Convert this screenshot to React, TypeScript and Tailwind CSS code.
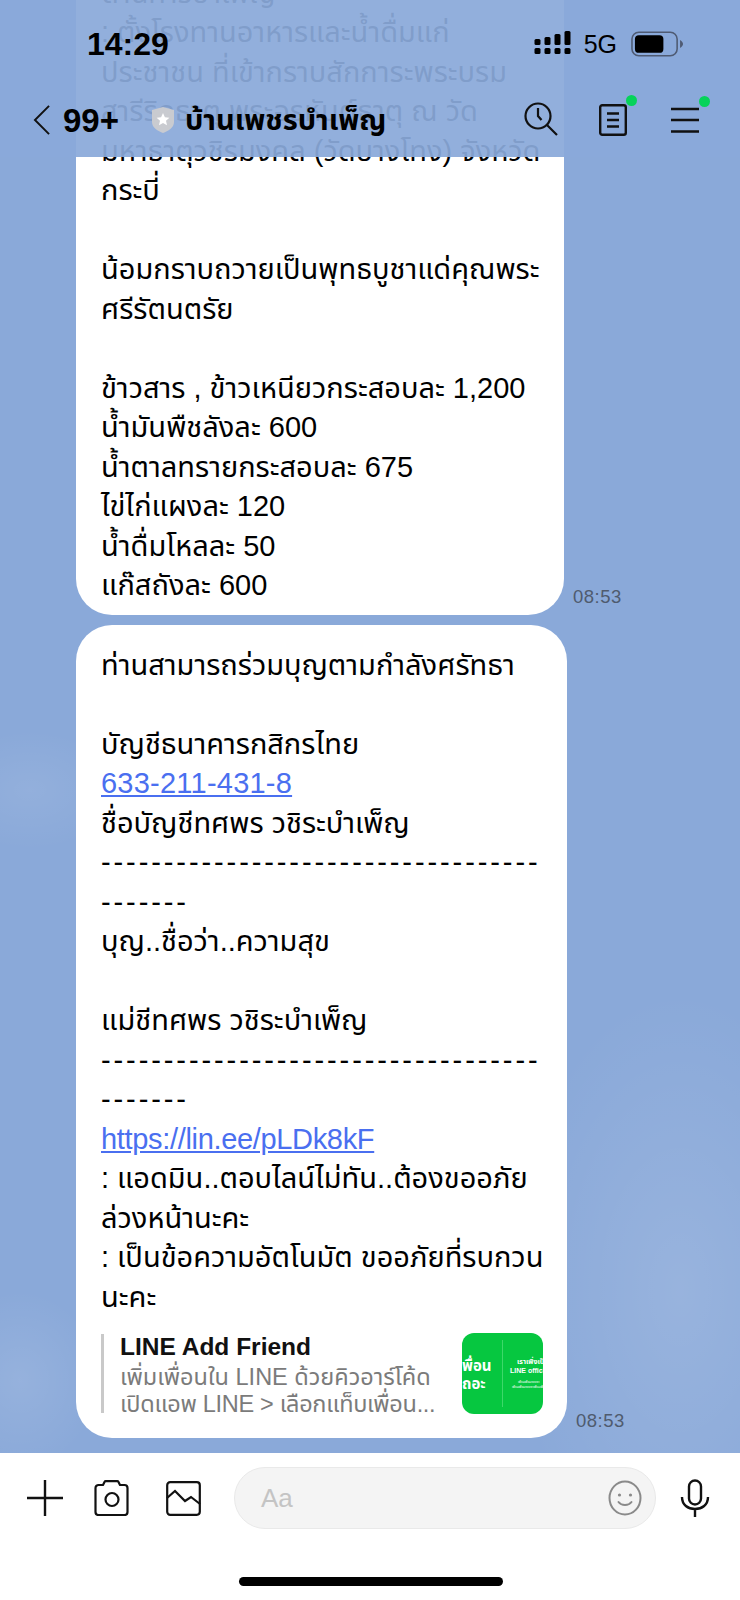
import React from "react";

const latin = "font-['Liberation_Sans',sans-serif]";
const thai = "font-['Liberation_Sans','Noto_Sans_Thai','Noto_Sans',sans-serif]";

const firstBubble = [
  "ด้านการบำเพ็ญ",
  ": ตั้งโรงทานอาหารและน้ำดื่มแก่",
  "ประชาชน ที่เข้ากราบสักการะพระบรม",
  "สารีริกธาตุ พระอรหันต์ธาตุ ณ วัด",
  "มหาธาตุวชิรมงคล (วัดบางโทง) จังหวัด",
  "กระบี่",
  "",
  "น้อมกราบถวายเป็นพุทธบูชาแด่คุณพระ",
  "ศรีรัตนตรัย",
  "",
  "ข้าวสาร , ข้าวเหนียวกระสอบละ 1,200",
  "น้ำมันพืชลังละ 600",
  "น้ำตาลทรายกระสอบละ 675",
  "ไข่ไก่แผงละ 120",
  "น้ำดื่มโหลละ 50",
  "แก๊สถังละ 600",
];

const Line = ({ children }: { children?: React.ReactNode }) => (
  <div className="h-[39.5px] leading-[39.5px] whitespace-nowrap">{children}</div>
);

const Dashes = () => (
  <>
    <Line>
      <span className="tracking-[2.9px]">-----------------------------------</span>
    </Line>
    <Line>
      <span className="tracking-[2.9px]">-------</span>
    </Line>
  </>
);

const Time = () => (
  <span className={`text-[18.500px] leading-none text-[#4f5b6e] tracking-[0.5px] mb-[8px] ml-[9px] ${latin}`}>
    08:53
  </span>
);

export default function App() {
  return (
    <div className={`relative w-[740px] h-[1600px] overflow-hidden flex flex-col bg-white text-black ${thai}`}>
      {/* Chat area */}
      <div className="h-[1453px] bg-[#8aa9d9] bg-[radial-gradient(ellipse_170px_300px_at_680px_1290px,rgba(255,255,255,0.12),transparent),radial-gradient(ellipse_90px_60px_at_30px_790px,rgba(255,255,255,0.08),transparent),radial-gradient(ellipse_80px_90px_at_20px_1380px,rgba(255,255,255,0.1),transparent)] flex flex-col justify-end pb-[15px] pl-[76px] gap-[10px] overflow-hidden shrink-0">
        <div className="flex items-end">
          <div className="w-[488px] bg-white rounded-b-[36px] pl-[25px] pb-[9px] text-[29px]">
            {firstBubble.map((t, i) => (
              <Line key={i}>{t}</Line>
            ))}
          </div>
          <Time />
        </div>
        <div className="flex items-end">
          <div className="w-[491px] bg-white rounded-[36px] pl-[25px] pr-[24px] pt-[21px] pb-[24px] text-[29px]">
            <Line>ท่านสามารถร่วมบุญตามกำลังศรัทธา</Line>
            <Line />
            <Line>บัญชีธนาคารกสิกรไทย</Line>
            <Line>
              <span className="text-[#4a6ff0] underline tracking-[0.23px]">633-211-431-8</span>
            </Line>
            <Line>ชื่อบัญชีทศพร วชิระบำเพ็ญ</Line>
            <Dashes />
            <Line>บุญ..ชื่อว่า..ความสุข</Line>
            <Line />
            <Line>แม่ชีทศพร วชิระบำเพ็ญ</Line>
            <Dashes />
            <Line>
              <span className="text-[#4a6ff0] underline tracking-[-0.33px]">https://lin.ee/pLDk8kF</span>
            </Line>
            <Line>: แอดมิน..ตอบไลน์ไม่ทัน..ต้องขออภัย</Line>
            <Line>ล่วงหน้านะคะ</Line>
            <Line>: เป็นข้อความอัตโนมัต ขออภัยที่รบกวน</Line>
            <Line>นะคะ</Line>
            <div className="mt-[16px] flex items-center justify-between h-[81px]">
              <div className="border-l-[3px] border-[#c9c9c9] pl-[16px] pt-[3px] h-[79px] flex flex-col justify-center">
                <div className="text-[24.500px] leading-[28px] font-bold text-[#111]">LINE Add Friend</div>
                <div className="mt-[3px] text-[23.500px] leading-[27px] text-[#7b7b7b] whitespace-nowrap">เพิ่มเพื่อนใน LINE ด้วยคิวอาร์โค้ด</div>
                <div className="text-[23.500px] leading-[27px] text-[#7b7b7b] whitespace-nowrap tracking-[-0.3px]">เปิดแอพ LINE &gt; เลือกแท็บเพื่อน...</div>
              </div>
              <div className="w-[81px] h-[81px] rounded-[12px] bg-[#06c740] overflow-hidden text-white shrink-0 flex">
                <div className="w-[41px] border-r border-[#3dd86a] my-[7px] flex flex-col justify-center overflow-hidden pt-[3px]">
                  <div className="text-[15px] leading-[18px] font-bold whitespace-nowrap">พื่อน</div>
                  <div className="text-[15px] leading-[18px] font-bold whitespace-nowrap">ถอะ</div>
                </div>
                <div className="flex-1 pl-[7px] flex flex-col justify-center overflow-hidden">
                  <div className="pl-[7px] text-[7px] leading-[9px] font-bold whitespace-nowrap">เราเพิ่งเป็น</div>
                  <div className="text-[7px] leading-[10px] font-bold whitespace-nowrap">LINE official</div>
                  <div className="pl-[8px] mt-[4px] text-[3px] leading-[5px] whitespace-nowrap">เพื่อนเพื่อนของเรา</div>
                  <div className="pl-[2px] text-[3px] leading-[5px] whitespace-nowrap">เพื่อนเพื่อนของเราเพื่อนเพื่อน</div>
                </div>
              </div>
            </div>
          </div>
          <Time />
        </div>
      </div>

      {/* Bottom bar */}
      <div className="flex-1 bg-white relative">
        <div className="flex items-center h-[62px] mt-[14px] pl-[27px]">
          <svg width="36" height="36" viewBox="0 0 36 36" className="shrink-0" fill="none" stroke="#111" strokeWidth="2.4">
            <path d="M0 18H36M18 0V36" />
          </svg>
          <svg width="36" height="36" viewBox="0 0 36 36" className="shrink-0 ml-[31px]" fill="none" stroke="#111" strokeWidth="2.2">
            <path d="M1.500 8a3 3 0 0 1 3-3h4.500l1.500-3a1.500 1.500 0 0 1 1.300-.8h11.400a1.500 1.500 0 0 1 1.300 .8l1.500 3h4.500a3 3 0 0 1 3 3v24a3 3 0 0 1-3 3H4.500a3 3 0 0 1-3-3Z" strokeLinejoin="round" />
            <circle cx="18" cy="19.500" r="6.500" />
          </svg>
          <svg width="35" height="35" viewBox="0 0 35 35" className="shrink-0 ml-[36px]" fill="none" stroke="#111" strokeWidth="2.2">
            <rect x="1.200" y="1.200" width="32.600" height="32.600" rx="3" />
            <path d="M1 17l8-7 10 10 6-4 9 7" />
          </svg>
          <div className="ml-[33px] w-[422px] h-[62px] rounded-full bg-[#f4f4f4] border border-[#e9e9e9] flex items-center justify-between pl-[26px] pr-[13px]">
            <span className="text-[26px] text-[#c4c4c4]">Aa</span>
            <svg width="34" height="36" viewBox="0 0 34 36" fill="none" stroke="#8a8a8a" strokeWidth="2">
              <ellipse cx="17" cy="18" rx="15.500" ry="16.500" />
              <circle cx="11.500" cy="15" r="1.600" fill="#8a8a8a" stroke="none" />
              <circle cx="22.500" cy="15" r="1.600" fill="#8a8a8a" stroke="none" />
              <path d="M10.500 22c3 4 10 4 13 0" strokeLinecap="round" />
            </svg>
          </div>
          <svg width="30" height="38" viewBox="0 0 30 38" className="shrink-0 ml-[24px]" fill="none" stroke="#111" strokeWidth="2.4">
            <rect x="9" y="1.500" width="12" height="24" rx="6" />
            <path d="M2 18c0 8 6 12 13 12s13-4 13-12M15 30v8" />
          </svg>
        </div>
        <div className="absolute bottom-[14px] left-[239px] w-[264px] h-[9px] rounded-full bg-black" />
      </div>

      {/* Header lies over the scrolled bubble */}
      <div className="absolute top-0 left-0 w-full h-[157px] bg-[#8aa9d9]/93">
        <div className="flex items-center justify-between h-[88px] pl-[87px] pr-[56px]">
          <span className="text-[32px] font-semibold leading-none">14:29</span>
          <div className="flex items-center">
            <svg width="39" height="26" viewBox="0 0 38 26" fill="#000">
              <rect x="1" y="17" width="6" height="6" rx="1.500" />
              <rect x="1" y="8" width="6" height="6" rx="1.500" />
              <rect x="11" y="17" width="6" height="6" rx="1.500" />
              <rect x="11" y="6" width="6" height="8" rx="1.500" />
              <rect x="21" y="17" width="6" height="6" rx="1.500" />
              <rect x="21" y="3" width="6" height="11" rx="1.500" />
              <rect x="31" y="17" width="6" height="6" rx="1.500" />
              <rect x="31" y="0" width="6" height="14" rx="1.500" />
            </svg>
            <span className="ml-[12px] text-[25px] leading-none">5G</span>
            <svg width="53" height="26" viewBox="0 0 54 26" className="ml-[14px]">
              <rect x="1" y="1" width="46" height="24" rx="7" fill="none" stroke="#4f5b73" strokeWidth="1.600" />
              <rect x="4" y="4" width="29" height="18" rx="4" fill="#000" />
              <path d="M50 9c2 1 3 3 3 4s-1 3-3 4Z" fill="#4f5b73" />
            </svg>
          </div>
        </div>
        <div className="flex items-center h-[48px] mt-[8px] pl-[32px]">
          <svg width="20" height="30" viewBox="0 0 20 34" fill="none" stroke="#111" strokeWidth="2.2" className="shrink-0">
            <path d="M18 1L2 17l16 16" />
          </svg>
          <span className="ml-[11px] text-[33px] font-bold leading-none">99+</span>
          <svg width="24" height="28" viewBox="0 0 24 28" className="ml-[32px] shrink-0">
            <path d="M12 1l11 3v12c0 6-6 9-11 11C7 25 1 22 1 16V4Z" fill="#c9cbd0" />
            <path d="M12 7l1.900 4.200 4.500 .5-3.400 3 1 4.500L12 16.900 8 19.200l1-4.500-3.400-3 4.500-.5Z" fill="#fff" />
          </svg>
          <span className="ml-[10px] text-[29px] font-bold leading-none whitespace-nowrap">บ้านเพชรบำเพ็ญ</span>
          <div className="ml-auto flex items-center pr-[41px]">
            <svg width="34" height="34" viewBox="0 0 34 34" fill="none" stroke="#111" strokeWidth="2.2" className="-mt-[3px]">
              <circle cx="14" cy="14" r="12.500" />
              <path d="M23 23l10 10M14 6v8l3.500 4" />
            </svg>
            <div className="relative ml-[41px]">
              <svg width="28" height="32" viewBox="0 0 28 32" fill="none" stroke="#111" strokeWidth="2.4">
                <rect x="1.200" y="1.200" width="25.600" height="29.600" rx="2" />
                <path d="M8 9.500h12M8 16h12M8 22.500h12" />
              </svg>
              <span className="absolute -top-[9px] -right-[10px] w-[11px] h-[11px] rounded-full bg-[#06d35a]" />
            </div>
            <div className="relative ml-[44px]">
              <svg width="28" height="26" viewBox="0 0 28 26" fill="none" stroke="#111" strokeWidth="2.4">
                <path d="M0 2h28M0 13h28M0 24.500h28" />
              </svg>
              <span className="absolute -top-[11px] -right-[11px] w-[11px] h-[11px] rounded-full bg-[#06d35a]" />
            </div>
          </div>
        </div>
      </div>
    </div>
  );
}
